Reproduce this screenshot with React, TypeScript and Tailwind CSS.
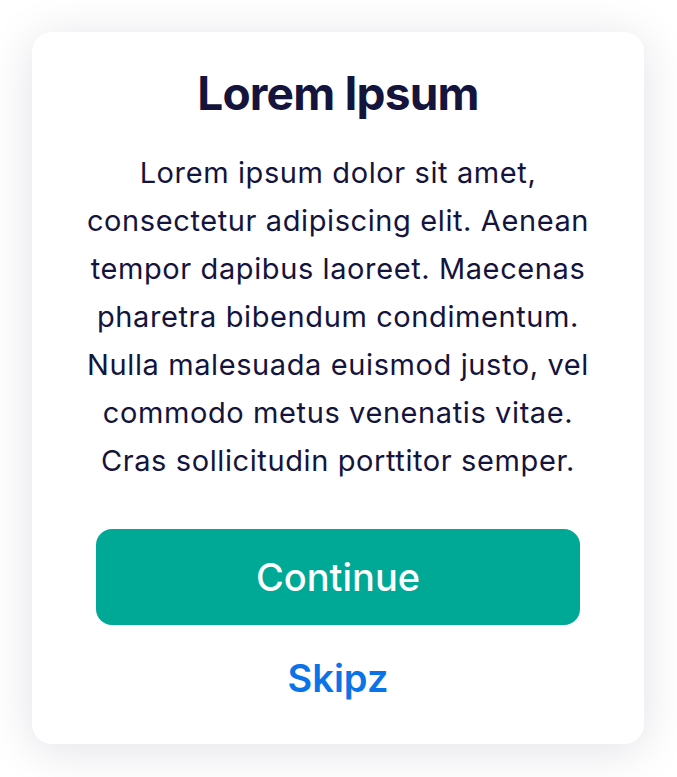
import React from "react";

export default function App() {
  return (
    <div className="min-h-[777px] w-[677px] bg-white p-8" style={{ fontFamily: "Inter, 'Noto Sans', sans-serif" }}>
      <div className="flex w-[612px] flex-col items-center rounded-[20px] bg-white px-11 pt-[33px] pb-[44px] shadow-[0_6px_48px_rgba(20,20,60,0.12)]">
        <h1 className="text-[46px] font-bold leading-[56px] tracking-[-0.8px] text-[#14143c]">Lorem Ipsum</h1>
        <p className="mt-[28px] text-center text-[29px] leading-[48px] tracking-[0.6px] text-[#14143c]">
          Lorem ipsum dolor sit amet, consectetur adipiscing elit. Aenean tempor dapibus laoreet. Maecenas pharetra bibendum condimentum. Nulla malesuada euismod justo, vel commodo metus venenatis vitae. Cras sollicitudin porttitor semper.
        </p>
        <button className="mt-[44px] flex h-[96px] w-[484px] items-center justify-center rounded-[16px] bg-[#00a896] text-[38px] font-medium text-white">
          Continue
        </button>
        <button className="mt-[31px] text-[38px] font-semibold leading-[44px] text-[#0a73e8]">Skipz</button>
      </div>
    </div>
  );
}
